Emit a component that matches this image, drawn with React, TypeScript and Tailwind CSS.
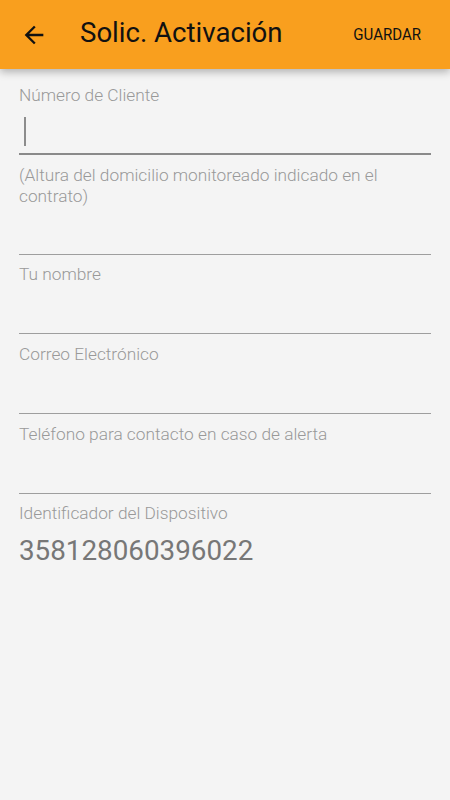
import React from "react";

function BackArrow() {
  return (
    <svg width="28" height="28" viewBox="0 0 24 24" fill="#111111">
      <path d="M20 11H7.83l5.59-5.59L12 4l-8 8 8 8 1.41-1.41L7.83 13H20v-2z" />
    </svg>
  );
}

interface FieldProps {
  label: string;
  focused?: boolean;
  top?: string;
  inputH?: string;
}

function Field({ label, focused, top = "pt-[10px]", inputH = "h-[49px]" }: FieldProps) {
  return (
    <div className={top}>
      <div className="text-[17.3px] leading-[21px] font-light text-[#999999]">{label}</div>
      <div
        className={`${inputH} flex items-center ${
          focused ? "border-b-2 border-[#8a8a8a]" : "border-b border-[#9e9e9e]"
        }`}
      >
        {focused && <div className="ml-[5px] mt-[3px] h-[29px] w-[2px] bg-[#8c8c8c]" />}
      </div>
    </div>
  );
}

export default function App() {
  return (
    <div
      className="w-[450px] h-[800px] bg-[#f4f4f4] overflow-hidden flex flex-col"
      style={{ fontFamily: "Roboto, 'Liberation Sans', sans-serif" }}
    >
      {/* Toolbar */}
      <div className="h-[69px] bg-[#f99f1e] flex items-center shadow-[0_3px_8px_rgba(0,0,0,0.28)] relative z-10">
        <div className="w-[80px] pl-[20px] pt-[1px] flex items-center">
          <BackArrow />
        </div>
        <div className="flex-1 text-[27.6px] text-[#111111] leading-none -mt-[3px]">Solic. Activación</div>
        <div className="mr-[29px] text-[16px] text-[#111111] scale-x-[0.94] origin-right">
          GUARDAR
        </div>
      </div>

      {/* Form */}
      <div className="px-[19px]">
        <Field label="Número de Cliente" focused top="pt-[16px]" />
        <Field
          label="(Altura del domicilio monitoreado indicado en el contrato)"
          inputH="h-[48px]"
        />
        <Field label="Tu nombre" top="pt-[9px]" />
        <Field label="Correo Electrónico" />
        <Field label="Teléfono para contacto en caso de alerta" />
        <div className="pt-[9px]">
          <div className="text-[17.3px] leading-[21px] font-light text-[#999999]">
            Identificador del Dispositivo
          </div>
          <div className="mt-[11px] text-[27.8px] leading-[32px] text-[#777777]">358128060396022</div>
        </div>
      </div>
    </div>
  );
}
